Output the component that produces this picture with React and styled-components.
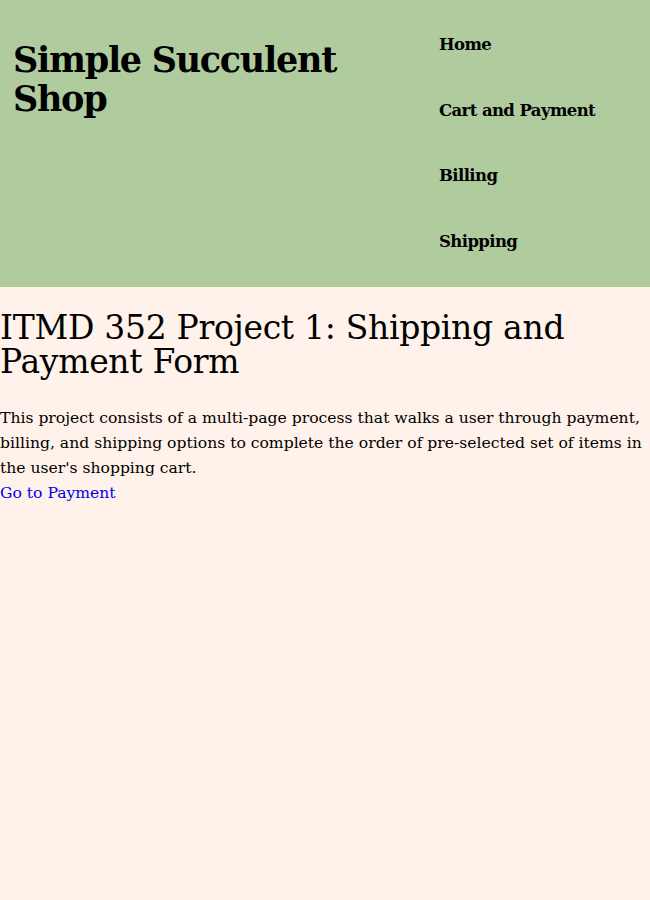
import { createGlobalStyle, styled } from "styled-components";

const GlobalStyle = createGlobalStyle`
  html, body {
    margin: 0;
    padding: 0;
    background: #fff2ea;
    font-family: "DejaVu Serif", "Liberation Serif", serif;
    color: #000;
  }
`;

const navItems = ["Home", "Cart and Payment", "Billing", "Shipping"];

const App = () => {
  return (
    <>
      <GlobalStyle />
      <Header>
        <Title>Simple Succulent Shop</Title>
        <Nav>
          {navItems.map((item) => (
            <NavItem key={item}>{item}</NavItem>
          ))}
        </Nav>
      </Header>
      <Main>
        <Heading>ITMD 352 Project 1: Shipping and Payment Form</Heading>
        <Intro>
          This project consists of a multi-page process that walks a user
          through payment, billing, and shipping options to complete the order
          of pre-selected set of items in the user's shopping cart.
        </Intro>
        <PayLink href="#">Go to Payment</PayLink>
      </Main>
    </>
  );
};

const Header = styled.header`
  display: grid;
  grid-template-columns: 426px 1fr;
  background-color: #b0cb9e;
  height: 287px;
  box-sizing: border-box;
  padding: 0 0 0 13px;
`;

const Title = styled.h1`
  margin: 40px 0 0;
  font-size: 35px;
  line-height: 39px;
  font-weight: bold;
  letter-spacing: -1.3px;
`;

const Nav = styled.nav`
  display: flex;
  flex-direction: column;
  padding-top: 33px;
  gap: 41.5px;
`;

const NavItem = styled.div`
  font-size: 16.5px;
  line-height: 24px;
  font-weight: bold;
  letter-spacing: -0.6px;
`;

const Main = styled.main`
  padding-top: 24px;
`;

const Heading = styled.h2`
  margin: 0;
  font-size: 33px;
  line-height: 34px;
  font-weight: normal;
  letter-spacing: -0.3px;
`;

const Intro = styled.p`
  margin: 27px 0 0;
  font-size: 15.6px;
  line-height: 25px;
`;

const PayLink = styled.a`
  display: block;
  color: #0000ee;
  text-decoration: none;
  font-size: 15.6px;
  line-height: 25px;
`;

export default App;
